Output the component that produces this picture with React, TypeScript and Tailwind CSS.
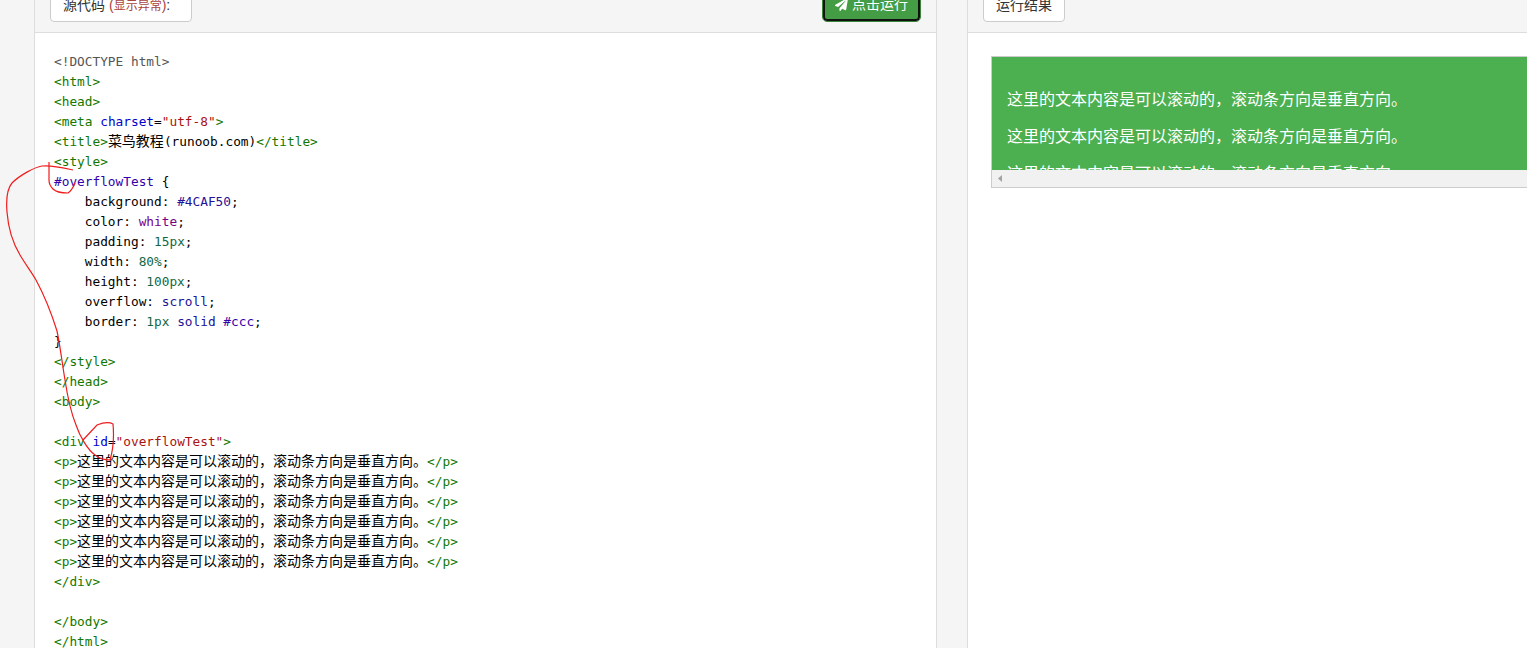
import { FaPaperPlane } from "react-icons/fa";

const MONO = "font-['DejaVu_Sans_Mono','Noto_Sans_CJK_SC',monospace] text-[12.79px]";
const P_TEXT = "这里的文本内容是可以滚动的\uFF0C滚动条方向是垂直方向。";

const Tag = ({ children }: { children: React.ReactNode }) => <span className="text-[#117700]">{children}</span>;
const Cjk = ({ children }: { children: React.ReactNode }) => (
  <span className="text-[14px] leading-none text-black font-['Noto_Sans_CJK_SC',sans-serif]">{children}</span>
);

// css 한 줄
const Prop = ({ name, children }: { name: string; children: React.ReactNode }) => (
  <div className="h-5 whitespace-pre">
    {"    "}
    <span className="text-black">{name}</span>
    <span className="text-black">: </span>
    {children}
    <span className="text-black">;</span>
  </div>
);

const Line = ({ children }: { children?: React.ReactNode }) => <div className="h-5 whitespace-pre">{children}</div>;

function CodePanel() {
  return (
    <div className={`${MONO} leading-5 text-black pt-[19px] pl-[19px]`}>
      <Line><span className="text-[#555555]">&lt;!DOCTYPE html&gt;</span></Line>
      <Line><Tag>&lt;html&gt;</Tag></Line>
      <Line><Tag>&lt;head&gt;</Tag></Line>
      <Line>
        <Tag>&lt;meta</Tag> <span className="text-[#0000cc]">charset</span>=<span className="text-[#aa1111]">"utf-8"</span><Tag>&gt;</Tag>
      </Line>
      <Line>
        <Tag>&lt;title&gt;</Tag><Cjk>菜鸟教程</Cjk>(runoob.com)<Tag>&lt;/title&gt;</Tag>
      </Line>
      <Line><Tag>&lt;style&gt;</Tag></Line>
      <Line><span className="text-[#3300aa]">#overflowTest</span> {"{"}</Line>
      <Prop name="background"><span className="text-[#221199]">#4CAF50</span></Prop>
      <Prop name="color"><span className="text-[#770088]">white</span></Prop>
      <Prop name="padding"><span className="text-[#116644]">15px</span></Prop>
      <Prop name="width"><span className="text-[#116644]">80%</span></Prop>
      <Prop name="height"><span className="text-[#116644]">100px</span></Prop>
      <Prop name="overflow"><span className="text-[#221199]">scroll</span></Prop>
      <Prop name="border">
        <span className="text-[#116644]">1px</span> <span className="text-[#221199]">solid</span>{" "}
        <span className="text-[#3300aa]">#ccc</span>
      </Prop>
      <Line>{"}"}</Line>
      <Line><Tag>&lt;/style&gt;</Tag></Line>
      <Line><Tag>&lt;/head&gt;</Tag></Line>
      <Line><Tag>&lt;body&gt;</Tag></Line>
      <Line />
      <Line>
        <Tag>&lt;div</Tag> <span className="text-[#0000cc]">id</span>=<span className="text-[#aa1111]">"overflowTest"</span><Tag>&gt;</Tag>
      </Line>
      {[0, 1, 2, 3, 4, 5].map((i) => (
        <Line key={i}>
          <Tag>&lt;p&gt;</Tag><Cjk>{P_TEXT}</Cjk><Tag>&lt;/p&gt;</Tag>
        </Line>
      ))}
      <Line><Tag>&lt;/div&gt;</Tag></Line>
      <Line />
      <Line><Tag>&lt;/body&gt;</Tag></Line>
      <Line><Tag>&lt;/html&gt;</Tag></Line>
    </div>
  );
}

export default function App() {
  return (
    <div className="relative h-[648px] w-[1527px] overflow-hidden bg-[#f5f5f5] font-['Liberation_Sans','Noto_Sans_CJK_SC',sans-serif] text-[14px] text-[#333333]">
      <div className="flex h-full pl-[34px]">
        {/* 소스 코드 */}
        <div className="h-full w-[903px] shrink-0 border-x border-[#dddddd] bg-white">
          <div className="flex h-[33px] items-end justify-between border-b border-[#dddddd] bg-[#f5f5f5] pl-[15px] pr-[16px] pb-[10px]">
            <div className="flex h-[34px] w-[142px] items-center rounded border border-[#cccccc] bg-white pl-[12px]">
              源代码
              <span className="ml-1 text-[#a94442]">
                (<span className="text-[12px]">显示异常</span>)
              </span>
              :
            </div>
            <div className="mb-px flex h-[33px] w-[97px] items-center justify-center gap-1 rounded border-2 border-[#111111] bg-[#449d44] text-white outline outline-1 outline-[#398439]">
              <FaPaperPlane className="size-[13px]" />
              点击运行
            </div>
          </div>
          <CodePanel />
        </div>
        {/* 실행 결과 */}
        <div className="ml-[30px] h-full w-[600px] shrink-0 border-l border-[#dddddd] bg-white">
          <div className="flex h-[33px] items-end border-b border-[#dddddd] bg-[#f5f5f5] pl-[15px] pb-[10px]">
            <div className="flex h-[34px] w-[82px] items-center rounded border border-[#cccccc] bg-white pl-[12px]">
              运行结果
            </div>
          </div>
          <div className="pl-[23px] pt-[23px]">
            <div className="h-[132px] w-[620px] border border-[#cccccc] bg-[#4caf50]">
              <div className="h-[113px] overflow-hidden px-[15px] pt-[32px] text-[16px] leading-[21px] text-white">
                <p className="mb-4">{P_TEXT}</p>
                <p className="mb-4">{P_TEXT}</p>
                <p className="mb-4">{P_TEXT}</p>
              </div>
              <div className="flex h-[17px] items-center bg-[#f1f1f1] pl-[6px]">
                <svg width="4" height="7" viewBox="0 0 4 7"><path d="M4 0v7L0 3.5z" fill="#a3a3a3" /></svg>
              </div>
            </div>
          </div>
        </div>
      </div>
      {/* 빨간 손글씨 표시 */}
      <svg className="pointer-events-none absolute inset-0" width="1527" height="648" fill="none" stroke="#f01c1c" strokeWidth="1.2">
        <path d="M73 170 C64 168 52 165 42 166 C35 167 20 175 12 183 C7 189 6 200 7 212 C8 225 11 240 20 255 C26 265 32 273 36 280 C43 293 52 315 57 331 C60 345 62 362 65 380 C68 400 72 415 76 425 C80 437 88 450 95 455 C100 459 106 460 110 460 C113 450 114 435 113 424 C108 421 102 423 97 425 L83 440" />
        <path d="M49 162 L49 180 C49 184 51 187 53 189 C56 192 60 193 68 193 C71 191 73 188 75 183" />
      </svg>
    </div>
  );
}
